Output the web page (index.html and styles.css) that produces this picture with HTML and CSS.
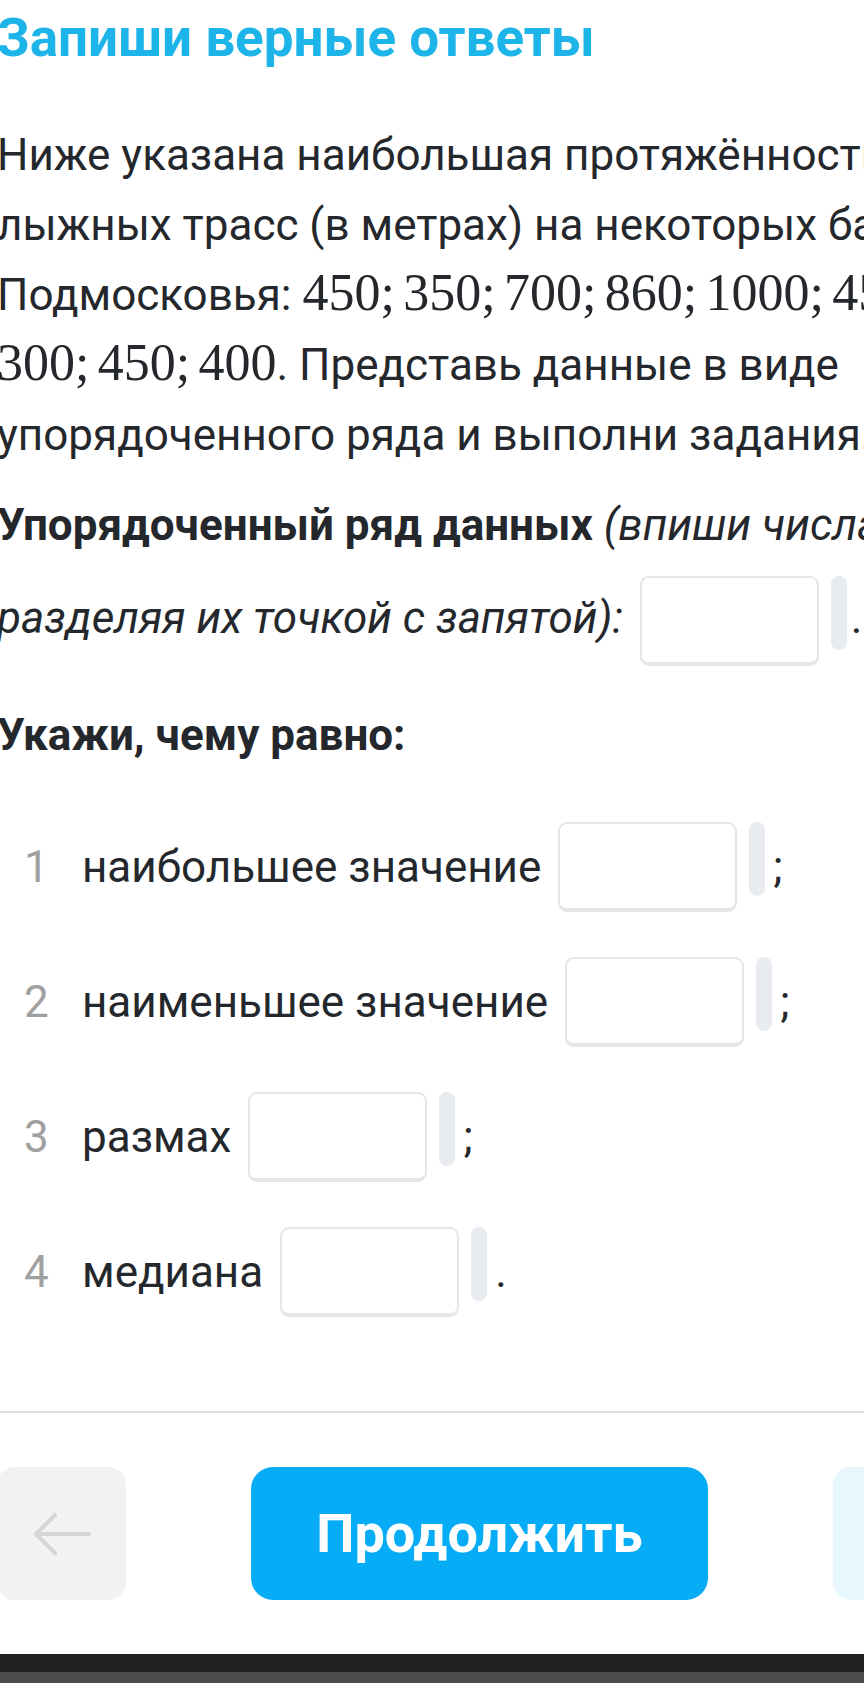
FILE: index.html
```html
<!DOCTYPE html>
<html lang="ru">
<head>
<meta charset="utf-8">
<title>Запиши верные ответы</title>
<link rel="stylesheet" href="styles.css">
</head>
<body>
<div class="screen">
  <div class="page">
    <h1 class="title">Запиши верные ответы</h1>
    <p class="text first">Ниже указана наибольшая протяжённость лыжных трасс (в метрах) на некоторых базах Подмосковья: <span class="math">450; 350; 700; 860; 1000; 450; 300; 450; 400</span>. Представь данные в виде упорядоченного ряда и выполни задания.</p>
    <p class="text series"><b>Упорядоченный ряд данных</b> <i>(впиши числа, разделяя их точкой с запятой):</i> <span class="answer inline"><span class="field"></span><span class="pill"></span></span>.</p>
    <p class="text heading">Укажи, чему равно:</p>
    <ol class="items">
      <li class="item"><span class="num">1</span><span class="label">наибольшее значение</span><span class="answer"><span class="field"></span><span class="pill"></span></span><span class="punct">;</span></li>
      <li class="item"><span class="num">2</span><span class="label">наименьшее значение</span><span class="answer"><span class="field"></span><span class="pill"></span></span><span class="punct">;</span></li>
      <li class="item"><span class="num">3</span><span class="label">размах</span><span class="answer"><span class="field"></span><span class="pill"></span></span><span class="punct">;</span></li>
      <li class="item"><span class="num">4</span><span class="label">медиана</span><span class="answer"><span class="field"></span><span class="pill"></span></span><span class="punct">.</span></li>
    </ol>
    <div class="divider"></div>
    <div class="footer">
      <button class="btn btn-back" type="button" aria-label="Назад">
        <svg width="60" height="44" viewBox="0 0 60 44" fill="none" stroke="#d5d5d5" stroke-width="4" stroke-linecap="round" stroke-linejoin="round"><path d="M4 22 H57 M4 22 L23 3 M4 22 L23 41"/></svg>
      </button>
      <button class="btn btn-main" type="button">Продолжить</button>
      <button class="btn btn-next" type="button" aria-label="Далее"></button>
    </div>
  </div>
  <div class="sysbar"><div class="sysbar-bottom"></div></div>
</div>
</body>
</html>
```

FILE: styles.css
```css
html, body {
  margin: 0;
  padding: 0;
  background: #ffffff;
}

body {
  font-family: Roboto, "Noto Sans", sans-serif;
  color: #24282c;
}

.screen {
  width: 864px;
  height: 1684px;
  overflow: hidden;
  display: flex;
  flex-direction: column;
}

.page {
  flex: none;
  width: 962px;
  margin-left: -3px;
  padding-top: 8px;
}

.title {
  margin: 0;
  font-size: 53px;
  line-height: 60px;
  font-weight: 700;
  color: #1db4e9;
}

.text {
  margin: 0;
  font-size: 44px;
  line-height: 70px;
}

.text.first {
  margin-top: 52px;
}

.text.series {
  margin-top: 20px;
}

.text b,
.text.heading {
  font-weight: 700;
}

.text i {
  font-style: italic;
}

.text.heading {
  margin-top: 18px;
}

.math {
  font-family: "Liberation Serif", "Times New Roman", serif;
  font-size: 52px;
  line-height: 1;
  word-spacing: -0.09em;
}

.answer {
  display: inline-flex;
  align-items: flex-start;
  gap: 12px;
  vertical-align: middle;
  margin: 16px 4px 16px 17px;
}

.answer.inline {
  margin-left: 6px;
}

.field {
  display: block;
  width: 179px;
  height: 90px;
  box-sizing: border-box;
  border: 2px solid #e6e6e6;
  border-bottom-width: 4px;
  border-radius: 9px;
  background: #ffffff;
}

.pill {
  display: block;
  width: 16px;
  height: 74px;
  border-radius: 8px;
  background: #e8ecf0;
}

.items {
  list-style: none;
  margin: 52px 0 0;
  padding: 0 0 0 27px;
}

.item {
  display: flex;
  align-items: center;
  height: 90px;
  font-size: 44px;
  line-height: 70px;
}

.item + .item {
  margin-top: 45px;
}

.num {
  width: 24px;
  margin-right: 34px;
  color: #a0a0a0;
}

.item .answer {
  margin: 0 8px 0 17px;
  align-self: flex-start;
}

.divider {
  height: 2px;
  margin-top: 94px;
  background: #dedede;
}

.footer {
  display: flex;
  justify-content: space-between;
  align-items: center;
  margin-top: 54px;
}

.btn {
  border: none;
  padding: 0;
  margin: 0;
  height: 133px;
  display: flex;
  align-items: center;
  justify-content: center;
  font-family: inherit;
}

.btn-back {
  width: 129px;
  border-radius: 18px;
  background: #f2f2f2;
}

.btn-main {
  width: 457px;
  border-radius: 22px;
  background: #06adf6;
  color: #ffffff;
  font-size: 54px;
  font-weight: 700;
}

.btn-next {
  width: 126px;
  border-radius: 18px;
  background: #e6f8fd;
}

.sysbar {
  flex: none;
  margin-top: 54px;
  height: 29px;
  background: #212121;
  display: flex;
  flex-direction: column;
  justify-content: flex-end;
}

.sysbar-bottom {
  height: 11px;
  background: #4b4b4b;
}
```
